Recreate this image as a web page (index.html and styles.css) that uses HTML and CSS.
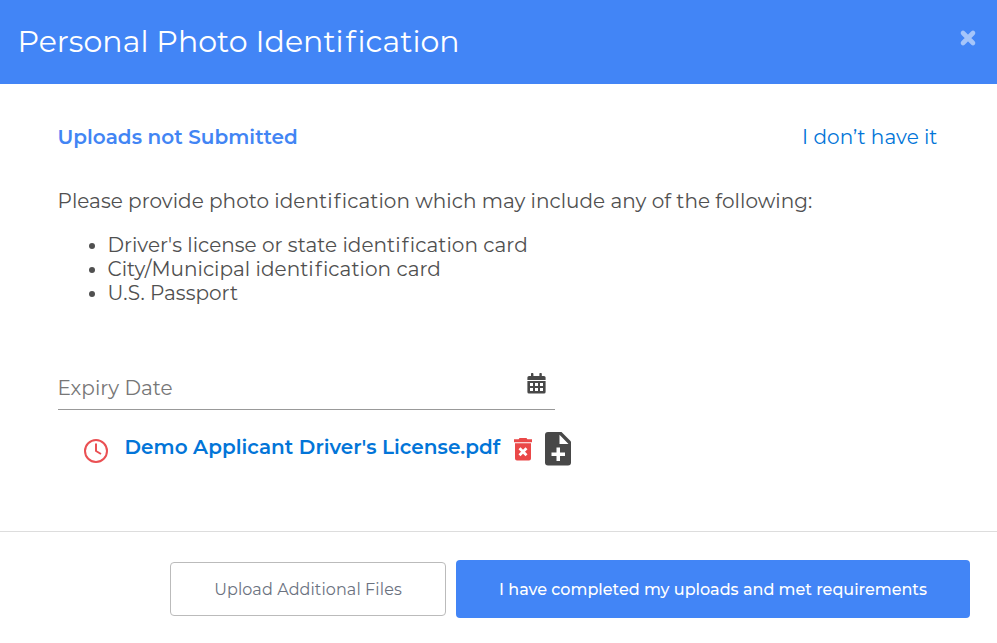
FILE: index.html
```html
<!DOCTYPE html>
<html lang="en">
<head>
    <meta charset="UTF-8">
    <meta name="viewport" content="width=device-width, initial-scale=1.0">
    <title>Personal Photo Identification</title>
    <link rel="stylesheet" href="styles.css">
</head>
<body>
    <div class="modal">
        <header class="modal-header">
            <h1 class="modal-title">Personal Photo Ident<span class="wide">if</span>ication</h1>
            <button class="close" type="button" aria-label="Close">
                <svg width="18" height="18" viewBox="0 0 18 18"><path d="M4 4l10 10M14 4L4 14" stroke="#a5c5fa" stroke-width="4.600" stroke-linecap="round"/></svg>
            </button>
        </header>

        <main class="modal-body">
            <div class="status-row">
                <span class="status">Uploads not Submitted</span>
                <a class="skip" href="#">I don’t have it</a>
            </div>

            <p class="intro">Please provide photo ident<span class="wide">if</span>ication which may include any of the following:</p>
            <ul class="options">
                <li>Driver's license or state ident<span class="wide">if</span>ication card</li>
                <li>City/Municipal ident<span class="wide">if</span>ication card</li>
                <li>U.S. Passport</li>
            </ul>

            <div class="expiry">
                <span class="expiry-label">Expiry Date</span>
                <svg class="calendar" width="19" height="21" viewBox="0 0 19 21">
                    <path fill="#484848" d="M4 1a1 1 0 0 1 2.400 0v2h6V1a1 1 0 0 1 2.400 0v2H17a1.600 1.600 0 0 1 1.600 1.600V7H.4V4.600A1.600 1.600 0 0 1 2 3h2zM.4 8h18.200v10.900a1.600 1.600 0 0 1-1.600 1.600H2A1.600 1.600 0 0 1 .4 18.900z"/>
                    <path fill="#fff" d="M3 10h3v3H3zM8 10h3v3H8zM13 10h3v3h-3zM3 15h3v3H3zM8 15h3v3H8zM13 15h3v3h-3z"/>
                </svg>
            </div>

            <div class="file-row">
                <svg class="clock" width="26" height="26" viewBox="0 0 26 26" fill="none" stroke="#ea5053" stroke-width="2">
                    <circle cx="13" cy="13" r="11"/>
                    <path d="M13 5.500v7.500l5 3" stroke-linejoin="round"/>
                </svg>
                <a class="file-name" href="#">Demo Applicant Driver's License.pdf</a>
                <svg class="trash" width="18" height="23" viewBox="0 0 18 23">
                    <path fill="#ea4848" d="M5.500 0h7l.8 1.200H18v3H0v-3h4.700zM1 5.200h16v15.300a2 2 0 0 1-2 2H3a2 2 0 0 1-2-2z"/>
                    <path d="M5.500 10.200l7 7M12.500 10.200l-7 7" stroke="#fff" stroke-width="2.800"/>
                </svg>
                <svg class="add-file" width="26" height="34" viewBox="0 0 26 34">
                    <path fill="#484848" d="M3 0h13.500L26 9.500V30.500a3 3 0 0 1-3 3H3a3 3 0 0 1-3-3V3a3 3 0 0 1 3-3z"/>
                    <path fill="#fff" d="M14.500 2.800l9 9.200h-9zM11.500 15.500H15v5h5V24h-5v5h-3.500v-5h-5v-3.500h5z"/>
                </svg>
            </div>
        </main>

        <footer class="modal-footer">
            <button class="btn btn-outline" type="button">Upload Additional Files</button>
            <button class="btn btn-primary" type="button">I have completed my uploads and met requirements</button>
        </footer>
    </div>
</body>
</html>
```
FILE: styles.css
```css
* {
    box-sizing: border-box;
}
body {
    margin: 0;
    background-color: #fff;
    color: #505050;
    font-family: Montserrat, Inter, sans-serif;
    font-size: 20px;
    font-weight: 400;
    font-variant-ligatures: none;
    letter-spacing: 0.03px;
    line-height: 24px;
}
a {
    color: #0275d8;
    text-decoration: none;
}
svg {
    display: block;
    flex: none;
}
.wide {
    letter-spacing: 0.06em;
}
.modal {
    display: flex;
    flex-direction: column;
    height: 643px;
    overflow: hidden;
    white-space: nowrap;
}
.modal-header {
    display: flex;
    justify-content: space-between;
    height: 84px;
    padding: 22px 20px 0 17.5px;
    background-color: #4285f6;
}
.modal-title {
    margin: 0;
    color: #fff;
    font-size: 30px;
    font-weight: 400;
    line-height: 40px;
}
.close {
    width: 18px;
    height: 18px;
    margin-top: 7px;
    padding: 0;
    border: 0;
    background: none;
}
.modal-body {
    height: 447px;
    padding: 41px 59.5px 0 57.5px;
}
.status-row {
    display: flex;
    justify-content: space-between;
}
.status {
    color: #4285f4;
    font-weight: 600;
}
.skip {
    letter-spacing: 0.05px;
}
.intro {
    margin: 40px 0 20px;
}
.options {
    margin: 0;
    padding-left: 50px;
}
.expiry {
    display: flex;
    justify-content: space-between;
    width: 497px;
    height: 41px;
    margin-top: 64px;
    padding: 7px 8.5px 0 0;
    border-bottom: 1px solid #999;
}
.expiry-label {
    color: #777;
}
.calendar {
    margin-top: -3px;
}
.file-row {
    display: flex;
    align-items: flex-start;
    padding: 21px 0 0 25.5px;
}
.clock {
    margin: 7px 15.5px 0 0;
}
.file-name {
    width: 377.5px;
    margin: 4px 12px 0 0;
    font-weight: 600;
}
.trash {
    margin: 7px 13px 0 0;
}
.add-file {
    margin-top: 1px;
}
.modal-footer {
    display: flex;
    justify-content: flex-end;
    align-items: flex-start;
    gap: 10px;
    height: 112px;
    padding: 28px 27px 0;
    border-top: 1px solid #ddd;
}
.btn {
    padding: 2px 0 0;
    border-radius: 4px;
    font-family: inherit;
    font-size: 16px;
    line-height: 24px;
}
.btn-outline {
    width: 276px;
    height: 54px;
    margin-top: 2px;
    border: 1px solid #bbb;
    background-color: #fff;
    color: #6b7280;
    font-weight: 400;
    letter-spacing: 0.1px;
}
.btn-primary {
    width: 514px;
    height: 58px;
    border: 0;
    background-color: #4285f6;
    color: #fff;
    font-weight: 500;
}
```
